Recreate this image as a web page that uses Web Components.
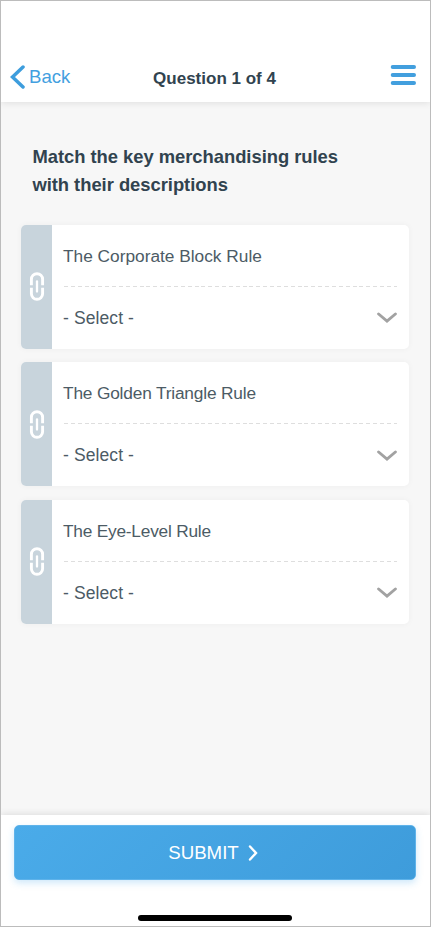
<!DOCTYPE html>
<html lang="en"><head><meta charset="utf-8"><title>Question 1 of 4</title>
<style>
html,body{margin:0;height:100%;background:#f7f7f7}
body{font-family:"Liberation Sans",Arial,sans-serif;color:#31434f}
</style></head><body>
<quiz-screen>
<quiz-header slot="header">Question 1 of 4</quiz-header>
<quiz-prompt>Match the key merchandising rules<br>with their descriptions</quiz-prompt>
<match-list>
<match-card>The Corporate Block Rule</match-card>
<match-card style="--tracking:-.17px">The Golden Triangle Rule</match-card>
<match-card style="--tracking:-.22px">The Eye-Level Rule</match-card>
</match-list>
<quiz-footer slot="footer">SUBMIT</quiz-footer>
</quiz-screen>
<script>
const define=(name,html)=>customElements.define(name,class extends HTMLElement{
  constructor(){super();this.attachShadow({mode:'open'}).innerHTML=html}
});
define('quiz-screen',`<style>
:host{display:flex;flex-direction:column;box-sizing:border-box;height:100vh;border:1px solid #bcbcbc;background:#f7f7f7;overflow:hidden}
main{flex:1;min-height:0}
</style><slot name="header"></slot><main><slot></slot></main><slot name="footer"></slot>`);
define('quiz-header',`<style>
:host{display:grid;grid-template-columns:1fr auto 1fr;align-items:center;box-sizing:border-box;height:101px;padding:50px 14px 0 9px;background:#fff;box-shadow:0 1px 7px rgba(0,0,0,.1);font-size:17px;font-weight:700;line-height:20px}
.back{display:flex;align-items:center;gap:4px;color:#43a0df;font-size:18.6px;font-weight:400}
.title{padding:4px 0 0 3px}
svg{display:block}.menu{justify-self:end;margin-top:-3px}
</style><div class="back"><svg width="15" height="24" viewBox="0 0 15 24"><path d="M13 2 2.5 12 13 22" fill="none" stroke="#3d9ddd" stroke-width="3.5" stroke-linecap="round"/></svg><span>Back</span></div>
<div class="title"><slot></slot></div>
<svg class="menu" width="26" height="22" viewBox="0 0 26 22"><path d="M2.7 3h21.3M2.7 11h21.3M2.7 19h21.3" stroke="#429fde" stroke-width="4" stroke-linecap="round"/></svg>`);
define('quiz-prompt',`<style>
:host{display:block;padding:41px 20px 0 31.4px;font-size:18.4px;font-weight:700;line-height:27.5px;letter-spacing:-.03px}
</style><slot></slot>`);
define('match-list',`<style>
:host{display:flex;flex-direction:column;gap:13.7px;padding:26.5px 21px 0 20px}
</style><slot></slot>`);
define('match-card',`<style>
:host{display:flex;height:124px;border-radius:5px;background:#fff;box-shadow:0 0 6px rgba(0,0,0,.045);overflow:hidden;color:#4c5b65;font-size:17.3px;line-height:22px}
.link{width:31px;background:#c8d4dc;display:grid;place-items:center}
.body{flex:1;padding:0 12px 0 11px;display:grid;grid-template-rows:61px 1px 62px}
.row{display:flex;align-items:center;justify-content:space-between}
.top{padding-top:1px;letter-spacing:var(--tracking,0)}.select span{font-size:17.5px;letter-spacing:.1px}
.rule{margin-left:1px;background:repeating-linear-gradient(90deg,#dedede 0 4px,transparent 4px 6.87px)}
svg{display:block}.select svg{margin-top:1px}
</style><div class="link"><svg width="16" height="29" viewBox="0 0 16 29" fill="none" stroke="#fff" stroke-width="2.9"><path d="M2.4 13.3V7.3a5.6 5.6 0 0 1 11.2 0V13.3M2.4 15.8v5.9a5.6 5.6 0 0 0 11.2 0V15.8"/><path d="M8 9.5v10" stroke-width="2.3" stroke-linecap="round"/></svg></div>
<div class="body"><div class="row top"><span><slot></slot></span></div><div class="rule"></div><div class="row select"><span>- Select -</span><svg width="20" height="12" viewBox="0 0 20 12"><path d="M1.6 2 10 9l8.4-7" fill="none" stroke="#a2a2a2" stroke-width="2.9" stroke-linecap="round" stroke-linejoin="miter"/></svg></div></div>`);
define('quiz-footer',`<style>
:host{display:flex;flex-direction:column;align-items:center;box-sizing:border-box;height:111px;padding:9.5px 14px 0 13px;background:#fff;box-shadow:0 -1px 7px rgba(0,0,0,.11)}
button{box-sizing:border-box;width:100%;height:55px;margin:0;padding:1px 4px 0 0;border:1px solid #5fb3ea;border-radius:5px;background:linear-gradient(135deg,#4aabe9,#3e9cdb);box-shadow:0 3px 7px rgba(65,165,235,.26);color:#fff;font:18.7px "Liberation Sans",Arial,sans-serif;display:flex;align-items:center;justify-content:center;gap:9px}
.home{width:154px;height:6px;border-radius:3px;background:#000;margin-top:35.5px}
</style><button><span><slot></slot></span><svg width="10" height="16" viewBox="0 0 10 16"><path d="m2 1.5 6 6.5-6 6.5" fill="none" stroke="#fff" stroke-width="2.4" stroke-linecap="round"/></svg></button><div class="home"></div>`);
</script></body></html>
